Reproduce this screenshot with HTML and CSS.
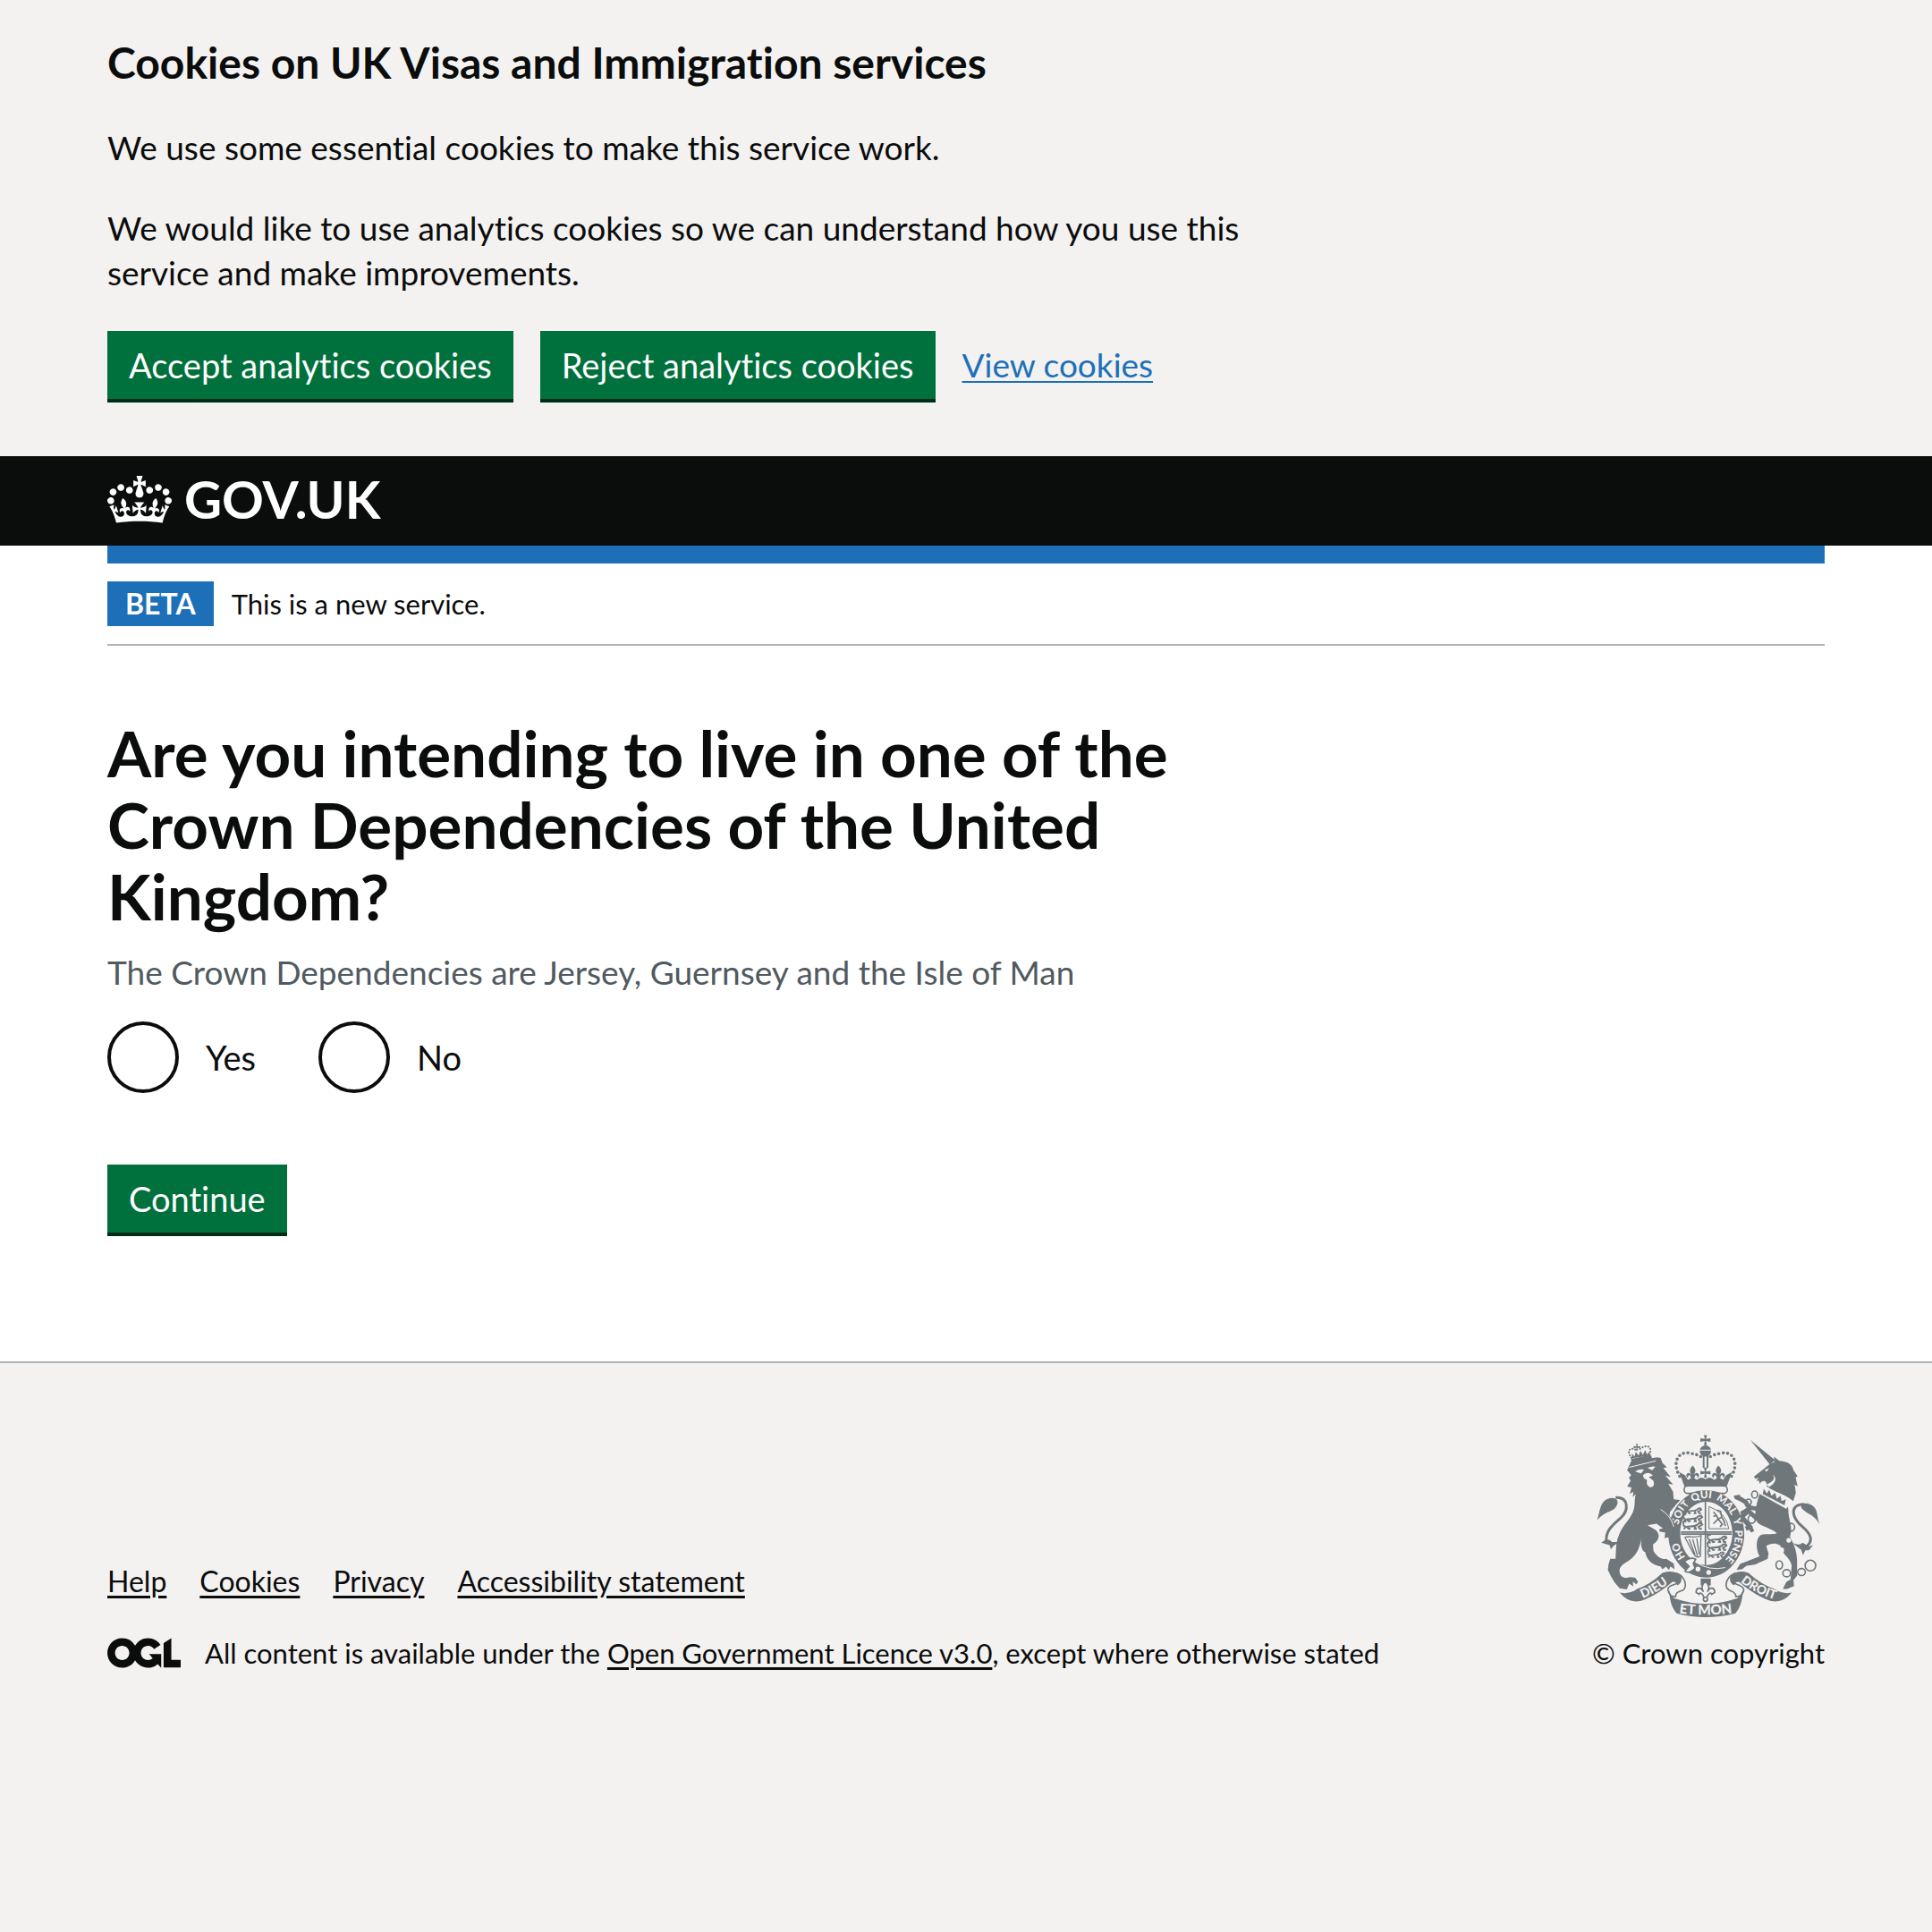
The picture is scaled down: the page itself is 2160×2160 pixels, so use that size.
FILE: index.html
```html
<!DOCTYPE html>
<html lang="en">
<head>
<meta charset="utf-8">
<meta name="viewport" content="width=device-width, initial-scale=1">
<title>Crown Dependencies – UK Visas and Immigration</title>
<link rel="stylesheet" href="styles.css">
</head>
<body>
<section class="cookie-banner" aria-label="Cookies on UK Visas and Immigration services">
  <div class="container">
    <div class="two-thirds">
      <h2 class="cookie-title">Cookies on UK Visas and Immigration services</h2>
      <p class="cookie-text">We use some essential cookies to make this service work.</p>
      <p class="cookie-text">We would like to use analytics cookies so we can understand how you use this service and make improvements.</p>
    </div>
    <div class="button-group">
      <button class="button" type="button">Accept analytics cookies</button>
      <button class="button" type="button">Reject analytics cookies</button>
      <a class="link" href="#cookies">View cookies</a>
    </div>
  </div>
</section>

<header class="header">
  <div class="container">
    <a class="logo" href="#home">
      <svg class="logo-crown" viewBox="0 0 132 97" aria-hidden="true" fill="currentColor">
        <path fill-rule="evenodd" d="M25 30.2c3.5 1.5 7.7-.2 9.1-3.7 1.5-3.6-.2-7.8-3.9-9.2-3.6-1.4-7.6.3-9.1 3.9-1.4 3.5.3 7.5 3.9 9zM9 39.5c3.6 1.5 7.8-.2 9.2-3.7 1.5-3.6-.2-7.8-3.9-9.1-3.6-1.5-7.6.2-9.1 3.8-1.4 3.5.3 7.5 3.8 9zM4.4 57.2c3.5 1.5 7.7-.2 9.1-3.8 1.5-3.6-.2-7.7-3.9-9.1-3.5-1.5-7.6.3-9.1 3.8-1.4 3.5.3 7.6 3.9 9.1zm38.3-21.4c3.5 1.5 7.7-.2 9.1-3.8 1.5-3.6-.2-7.7-3.9-9.1-3.6-1.5-7.6.3-9.1 3.8-1.3 3.6.4 7.7 3.9 9.1zm64.4-5.6c-3.6 1.5-7.8-.2-9.1-3.7-1.5-3.6.2-7.8 3.8-9.2 3.6-1.4 7.7.3 9.2 3.9 1.3 3.5-.4 7.5-3.9 9zm15.9 9.3c-3.6 1.5-7.7-.2-9.1-3.7-1.5-3.6.2-7.8 3.7-9.1 3.6-1.5 7.7.2 9.2 3.8 1.5 3.5-.3 7.5-3.8 9zm4.7 17.7c-3.6 1.5-7.8-.2-9.2-3.8-1.5-3.6.2-7.7 3.9-9.1 3.6-1.5 7.7.3 9.2 3.8 1.3 3.5-.4 7.6-3.9 9.1zM89.3 35.8c-3.6 1.5-7.8-.2-9.2-3.8-1.4-3.6.2-7.7 3.9-9.1 3.6-1.5 7.7.3 9.2 3.8 1.4 3.6-.3 7.7-3.9 9.1zM69.7 17.7l8.9 4.7V9.3l-8.9 2.8c-.2-.3-.5-.6-.9-.9L72.4 0H59.6l3.5 11.2c-.3.3-.6.5-.9.9l-8.8-2.8v13.1l8.8-4.7c.3.3.6.7.9.9l-5 15.4v.1c-.2.8-.4 1.6-.4 2.4 0 4.1 3.1 7.5 7 8.1h.2c.3 0 .7.1 1 .1.4 0 .7 0 1-.1h.2c4-.6 7.1-4.1 7.1-8.1 0-.8-.1-1.7-.4-2.4V34l-5.1-15.4c.4-.2.7-.6 1-.9zM66 92.8c16.9 0 32.8 1.1 47.1 3.2 4-16.9 8.9-26.7 14-33.5l-9.6-3.4c1 4.9 1.1 7.2 0 10.2-1.5-1.4-3-4.3-4.2-8.7L108.6 76c2.8-2 5-3.2 7.5-3.3-4.4 9.4-10 11.9-13.6 11.2-4.3-.8-6.3-4.6-5.6-7.9 1-4.7 5.7-5.9 8-.5 4.3-8.7-3-11.4-7.6-8.8 7.1-7.2 7.9-13.5 2.1-21.1-8 6.1-8.1 12.3-4.5 20.8-4.7-5.4-12.1-2.5-9.5 6.2 3.4-5.2 7.9-2 7.2 3.1-.6 4.3-6.4 7.8-13.5 7.2-10.3-.9-10.9-8-11.2-13.8 2.5-.5 7.1 1.8 11 7.3L80.2 60c-4.1 4.4-8 5.3-12.3 5.4 1.4-4.4 8-11.6 8-11.6H55.5s6.4 7.2 7.9 11.6c-4.2-.1-8-1-12.3-5.4l1.4 16.4c3.9-5.5 8.5-7.7 10.9-7.3-.3 5.8-.9 12.8-11.1 13.8-7.2.6-12.9-2.9-13.5-7.2-.7-5 3.8-8.3 7.1-3.1 2.7-8.7-4.6-11.6-9.4-6.2 3.7-8.5 3.6-14.7-4.6-20.8-5.8 7.6-5 13.9 2.2 21.1-4.7-2.6-11.9.1-7.7 8.8 2.3-5.5 7.1-4.2 8.1.5.7 3.3-1.3 7.1-5.7 7.9-3.5.7-9-1.8-13.5-11.2 2.5.1 4.7 1.3 7.5 3.3l-4.7-15.4c-1.2 4.4-2.7 7.2-4.3 8.7-1.1-3-.9-5.3 0-10.2l-9.5 3.4c5 6.9 9.9 16.7 14 33.5 14.8-2.1 30.8-3.2 47.7-3.2z"/>
      </svg>
      <span>GOV.UK</span>
    </a>
  </div>
</header>

<div class="container">
  <div class="blue-bar"></div>
  <div class="phase-banner">
    <strong class="tag">BETA</strong>
    <span>This is a new service.</span>
  </div>
  <main class="main">
    <form class="two-thirds">
      <fieldset class="fieldset" aria-describedby="hint">
        <legend><h1 class="title">Are you intending to live in one of the Crown Dependencies of the United Kingdom?</h1></legend>
        <div class="hint" id="hint">The Crown Dependencies are Jersey, Guernsey and the Isle of Man</div>
        <div class="radios">
          <div class="radio-item"><input class="radio" type="radio" name="live" id="yes"><label class="radio-label" for="yes">Yes</label></div>
          <div class="radio-item"><input class="radio" type="radio" name="live" id="no"><label class="radio-label" for="no">No</label></div>
        </div>
      </fieldset>
      <button class="button" type="button">Continue</button>
    </form>
  </main>
</div>

<footer class="footer">
  <div class="container footer-row">
    <div class="footer-main">
      <nav class="footer-links" aria-label="Support links">
        <a href="#help">Help</a>
        <a href="#cookies">Cookies</a>
        <a href="#privacy">Privacy</a>
        <a href="#accessibility">Accessibility statement</a>
      </nav>
      <div class="licence">
        <svg class="ogl" viewBox="0 0 483.2 195.7" aria-hidden="true" fill="currentColor">
          <path d="M421.5 142.8V.1l-50.7 32.3v161.1h112.4v-50.7zm-122.3-9.6A47.12 47.12 0 0 1 221 97.8c0-26 21.1-47.1 47.1-47.1 16.7 0 31.4 8.7 39.7 21.8l42.7-27.2A97.63 97.63 0 0 0 268.1 0c-36.5 0-68.3 20.1-85.1 49.7A98 98 0 0 0 97.8 0C43.9 0 0 43.9 0 97.8s43.9 97.8 97.8 97.8c36.5 0 68.3-20.1 85.1-49.7a97.76 97.76 0 0 0 149.6 25.4l19.4 22.2h3v-87.8h-80l24.3 27.5zM97.8 145c-26 0-47.1-21.1-47.1-47.1s21.1-47.1 47.1-47.1 47.1 21.1 47.1 47.1S123.8 145 97.8 145"/>
        </svg>
        <span>All content is available under the <a href="#licence">Open Government Licence v3.0</a>, except where otherwise stated</span>
      </div>
    </div>
    <a class="copyright" href="#copyright">
      <svg class="crest" viewBox="40 40 754 615" aria-hidden="true">
        <defs>
          <path id="garter" d="M348 462A97 118 0 1 1 443 483"/>
          <path id="dieu" d="M178 598Q240 578 296 530"/>
          <path id="droit" d="M519 531Q575 577 649 598"/>
          <path id="etmon" d="M310 640Q407 654 506 640"/>
          <g id="cross"><path d="M-5-17H5L2-4 17-6V6L2 3 5 17H-5L-2 3-17 6V-6L-2-4z"/></g>
          <g id="fleur"><path d="M0-20C14-6 7 3 2 10Q10-2 18 5 23 14 13 18 18 9 8 10L5 20H-5L-8 10Q-18 9-13 18-23 14-18 5-10-2-2 10C-7 3-14-6 0-20z"/></g>
          <g id="passant"><path d="M-32-5C-38-14-28-19-24-12M-25 4C-12 0 0 4 13-3L18-8 27-9 30-4 24 0 18 3 22 10H29M-24 3L-30 9-33 9M-20 4L-16 10H-9M8 2L5 10H12M-27 2Q-35 0-32-5"/></g>
        </defs>
        <g class="ink">
          <!-- lion -->
          <path d="M143 160L156 130 245 116 256 118 262 135 277 150 265 152 290 182 272 178 298 208 282 206 298 232 300 258 322 260 308 276 288 300 284 320 305 345 320 376 312 400 298 388 290 402 283 385 270 388 272 370 252 366 252 358 264 356 242 340 212 345 240 362C257 378 250 398 230 410L232 432C244 452 258 462 275 458L300 474 303 494 289 484 284 496 274 485 262 494 256 484C226 480 208 460 204 436 190 430 188 410 192 385 186 420 176 444 152 462 130 476 114 484 118 505 122 524 140 525 152 520L170 522 180 536 174 544 162 535 164 552 150 542 142 562 118 558 102 540 90 520 78 496 80 478 86 458 104 458C106 420 106 400 114 382 124 350 150 330 163 300 172 275 166 260 172 240L162 250 164 232 152 240 158 218 143 215 155 195 149 185 157 176z"/>
          <path class="line" stroke-width="9" d="M104 252C150 250 148 296 122 320 92 346 66 366 74 408"/>
          <path d="M42 328C52 300 50 264 82 255 108 248 118 266 106 282 98 300 70 296 42 328zM56 404Q80 384 92 402L120 402 100 412 88 426 84 412z"/>
          <path d="M161 136L155 122 222 108 228 120z"/>
          <path class="line" stroke-width="6" stroke-dasharray="1 9" stroke-linecap="round" d="M158 118C138 92 155 80 174 92M218 108C230 80 210 70 186 88"/>
          <use href="#cross" transform="translate(176 82) scale(.65)"/>
          <path d="M158 120L160 104 168 114 172 98 182 110 188 94 196 108 204 92 210 106 218 98 220 110z"/>
          <!-- unicorn -->
          <path d="M558 57L642 126 624 140z"/>
          <path d="M571 181L600 158 625 138 640 132 638 114 656 128C690 130 702 145 704 160L718 180 711 184 718 214 708 208 712 236 703 264C670 236 642 236 614 214 614 196 606 194 596 198L590 206 588 196 578 194 588 186 574 188z"/>
          <path d="M590 238L686 286C686 330 704 350 692 384 700 402 714 420 716 462V516L704 530 706 550 682 560 668 560 680 536 694 528 698 480C690 450 660 440 660 414 640 402 626 408 612 415L620 440 617 458 574 478 546 482 530 494 512 495 524 476 590 450C574 420 578 380 600 376 620 374 640 378 648 372 620 350 586 350 576 326 572 300 580 270 590 238z"/>
          <path class="line" stroke-width="15" stroke-linejoin="round" d="M586 290C566 286 552 292 544 268L514 250M582 324L548 294 530 318 562 356"/>
          <path d="M502 246L524 242 520 262 506 256zM540 350L560 342 572 364 562 370 554 360 546 364zM524 300L548 286 550 310 532 322z"/>
          <path class="line" stroke-width="9" d="M740 274C688 276 698 320 734 350 760 372 776 398 744 420"/>
          <path d="M792 342C780 310 790 282 752 272 730 268 722 284 738 294 758 312 774 310 792 342zM700 405Q726 416 734 404L756 416 770 412 756 430 744 430 736 446 730 428z"/>
          <!-- royal crown -->
          <use href="#cross" transform="translate(407 58)"/>
          <circle cx="407" cy="95" r="19"/>
          <path d="M398 112H404V152H398zM411 112H417V152H411z"/>
          <path class="line" stroke-width="11" stroke-dasharray="0 15" stroke-linecap="round" d="M320 180C292 130 318 92 358 103Q380 106 395 116M495 180C523 130 497 92 457 103Q435 106 420 116"/>
          <path d="M318 166L338 176 348 192Q365 180 378 192 392 178 407 190 422 178 437 192 450 180 467 192L477 176 497 166 478 216H337z"/>
          <use href="#fleur" transform="translate(364 166) scale(1.1)"/><use href="#fleur" transform="translate(451 166) scale(1.1)"/>
          <use href="#cross" transform="translate(407 168)"/>
          <!-- garter -->
          <path fill-rule="evenodd" d="M410 226C478 226 538 292 538 374S480 522 410 522 282 456 282 374 342 226 410 226zM410 266C362 266 322 314 322 372S362 480 410 480 498 430 498 372 458 266 410 266z"/>
        </g>
        <rect class="paper edge" x="335" y="212" width="146" height="26" rx="13"/>
        <path class="ink" d="M350 238Q407 216 466 238L460 246Q407 228 356 246z"/>
        <g class="crest-text garter-text">
          <text><textPath href="#garter" startOffset="7%">HO</textPath></text>
          <text><textPath href="#garter" startOffset="29%">SOIT</textPath></text>
          <text><textPath href="#garter" startOffset="44%">QUI</textPath></text>
          <text><textPath href="#garter" startOffset="59%">MAL</textPath></text>
          <text><textPath href="#garter" startOffset="70%">Y</textPath></text>
          <text><textPath href="#garter" startOffset="84%">PENSE</textPath></text>
        </g>
        <!-- paw resting on the garter -->
        <path class="ink" d="M256 292Q296 316 306 346L320 376 312 400 298 388 290 402 283 385 270 388 272 370 256 340z"/>
        <!-- shield -->
        <g class="line" stroke-width="5">
          <path d="M407 266V480M324 368H496M324 375H496"/>
          <path stroke-width="3" d="M419 282V357H486Q478 304 419 282z"/>
          <path stroke-width="5" d="M434 340L450 324 444 312 434 316M450 324L462 318 470 332 474 348M450 324L464 342 456 350M462 318L458 298 446 294M434 300L444 312"/>
          <path stroke-width="4" d="M338 386C352 378 370 392 392 380L390 450C370 460 368 440 338 386zM352 392L372 444M364 392L380 448M378 390L386 444"/>
        </g>
        <g class="line" stroke-width="6">
          <use href="#passant" transform="translate(366 296) scale(.9)"/><use href="#passant" transform="translate(366 322)"/><use href="#passant" transform="translate(366 347)"/>
          <use href="#passant" transform="translate(448 392)"/><use href="#passant" transform="translate(448 418)"/><use href="#passant" transform="translate(444 444) scale(.85)"/>
        </g>
        <!-- buckle -->
        <path class="paper edge" d="M336 468Q356 450 374 460L366 474 372 490Q352 510 338 500L352 484z"/>
        <g class="paper"><circle cx="382" cy="493" r="8"/><circle cx="418" cy="504" r="8"/></g>
        <path class="thin" d="M374 470Q420 500 474 488"/>
        <g class="ink"><path d="M391 525H425V548H391z"/></g>
        <path class="paper edge" d="M407 535C424 548 418 560 414 570 422 550 440 556 438 572L428 578C426 568 416 578 414 584L407 598 400 584C398 578 388 568 386 578L376 572C374 556 392 550 400 570 396 560 390 548 407 535z"/>
        <circle class="paper edge" cx="407" cy="595" r="7"/>
        <!-- motto ribbon -->
        <path class="paper edge" d="M290 508C330 500 346 540 336 560 326 572 308 564 306 586L292 584C270 560 284 550 300 546 322 540 322 528 290 508zM526 508C488 500 470 540 480 558 490 572 508 564 510 586L524 584C548 560 532 552 516 546 494 540 494 528 526 508z"/>
        <path class="ink" d="M118 572Q150 580 176 560 220 546 262 506 308 492 326 522 328 540 312 548 308 534 296 536 240 584 190 600 148 610 118 572zM698 572Q668 580 640 560 596 546 552 506 508 492 490 522 488 540 504 548 508 534 520 536 576 584 626 600 668 610 698 572zM284 562Q292 592 310 594 407 626 506 594 524 592 534 562C530 610 522 626 508 642Q407 668 310 642C296 626 288 610 284 562z"/>
        <g class="crest-text">
          <text><textPath href="#dieu" startOffset="50%">DIEU</textPath></text>
          <text><textPath href="#droit" startOffset="50%">DROIT</textPath></text>
          <text class="motto-centre"><textPath href="#etmon" startOffset="50%">ET MON</textPath></text>
        </g>
        <!-- light details over the animals -->
        <g class="paper">
          <path d="M170 164Q184 154 200 158L190 170zM212 152Q226 144 238 148L228 160zM196 176Q216 160 230 178L216 182 232 196Q238 214 222 218 206 212 210 192L200 188z"/>
          <path d="M606 160L622 152 614 164zM612 208C630 200 646 190 634 174 652 188 640 206 622 216z"/>
          <path d="M600 218L692 264 680 290 590 240z"/>
          <circle cx="688" cy="396" r="8"/><ellipse cx="664" cy="430" rx="8" ry="10"/>
        </g>
        <path class="ink" d="M600 240L604 222 614 238 622 226 630 246 642 236 648 256 660 246 664 264 678 258 674 278z"/>
        <g class="thin"><path d="M256 292Q290 312 300 350M150 150L240 128"/></g>
        <g class="ring">
          <ellipse cx="573" cy="242" rx="10" ry="12"/><circle cx="552" cy="267" r="10"/><ellipse cx="563" cy="325" rx="12" ry="14"/><ellipse cx="696" cy="352" rx="12" ry="13"/><ellipse cx="656" cy="479" rx="11" ry="14"/><ellipse cx="681" cy="507" rx="13" ry="12"/><ellipse cx="731" cy="503" rx="13" ry="12"/><circle cx="761" cy="481" r="18"/>
        </g>
        <path class="thin" d="M388 92H426"/>
      </svg>
      <span>© Crown copyright</span>
    </a>
  </div>
</footer>
</body>
</html>
```
FILE: styles.css
```css
html {
  background: #f3f2f1;
}

body {
  margin: 0;
  background: #fff;
  color: #0b0c0c;
  font: 37px/50px Lato, "Liberation Sans", sans-serif;
  font-variant-ligatures: none;
}

h1, h2, p {
  margin: 0;
}

a {
  color: inherit;
  text-decoration-thickness: 3px;
  text-underline-offset: 4px;
}

.container {
  margin: 0 120px;
}

.two-thirds {
  max-width: 1280px;
}

/* Cookie banner */
.cookie-banner {
  padding: 40px 0 60px;
  background: #f3f2f1;
}

.cookie-title {
  font-size: 48px;
  line-height: 60px;
}

.cookie-text {
  margin-top: 40px;
}

.button-group {
  display: flex;
  align-items: center;
  gap: 30px;
  margin-top: 40px;
}

.button {
  display: block;
  margin: 0 0 4px;
  padding: 13px 24px;
  border: 0;
  border-radius: 0;
  background: #00703c;
  box-shadow: 0 4px 0 #002d18;
  color: #fff;
  font: inherit;
  font-size: 38px;
}

.link {
  margin-bottom: 4px;
  color: #1d70b8;
  text-decoration-thickness: 2px;
}

/* Header */
.header {
  background: #0b0c0c;
  color: #fff;
}

.logo {
  display: inline-flex;
  box-sizing: border-box;
  align-items: center;
  gap: 14px;
  height: 100px;
  padding-bottom: 4px;
  font-size: 58px;
  font-weight: 700;
  text-decoration: none;
}

.logo-crown {
  width: 72px;
  height: 53px;
}

.blue-bar {
  height: 20px;
  background: #1d70b8;
}

.phase-banner {
  display: flex;
  align-items: center;
  gap: 20px;
  padding: 20px 0;
  border-bottom: 2px solid #b1b4b6;
  font-size: 31px;
}

.tag {
  padding: 0 20px;
  background: #1d70b8;
  color: #fff;
  font-size: 32px;
}

/* Question */
.main {
  padding: 80px 0 140px;
}

.fieldset {
  min-width: 0;
  margin: 0 0 80px;
  padding: 0;
  border: 0;
}

.fieldset legend {
  padding: 0;
}

.title {
  font-size: 71px;
  line-height: 80px;
}

.hint {
  margin-top: 20px;
  color: #505a5f;
}

.radios {
  display: flex;
  gap: 40px;
  margin-top: 30px;
}

.radio-item {
  display: flex;
  align-items: center;
}

.radio {
  appearance: none;
  box-sizing: border-box;
  width: 80px;
  height: 80px;
  margin: 0;
  border: 4px solid #0b0c0c;
  border-radius: 50%;
  background: #fff;
}

.radio-label {
  padding: 0 30px;
  font-size: 38px;
}

/* Footer */
.footer {
  padding: 80px 0 60px;
  border-top: 2px solid #b1b4b6;
  background: #f3f2f1;
  font-size: 31px;
  line-height: 40px;
}

.footer-row {
  display: flex;
  align-items: flex-end;
  justify-content: space-between;
}

.footer-links {
  display: flex;
  gap: 37px;
  margin-bottom: 40px;
  font-size: 32px;
}

.licence {
  display: flex;
  align-items: center;
  gap: 27px;
}

.ogl {
  width: 82px;
  height: 34px;
}

.copyright {
  display: flex;
  flex-direction: column;
  align-items: center;
  gap: 20px;
  text-decoration: none;
}

/* Coat of arms */
.crest {
  width: 250px;
  height: 204px;
}

.ink {
  fill: #6f777b;
}

.paper {
  fill: #f3f2f1;
}

.line, .edge, .ring, .thin {
  stroke: #6f777b;
}

.line, .ring, .thin {
  fill: none;
}

.edge {
  stroke-width: 5px;
}

.ring {
  stroke-width: 5px;
}

.thin {
  stroke: #f3f2f1;
  stroke-width: 3px;
}

.crest-text {
  fill: #f3f2f1;
  font-size: 42px;
  font-weight: 900;
  text-anchor: middle;
}

.garter-text {
  font-size: 35px;
}

.motto-centre {
  font-size: 46px;
}
```
